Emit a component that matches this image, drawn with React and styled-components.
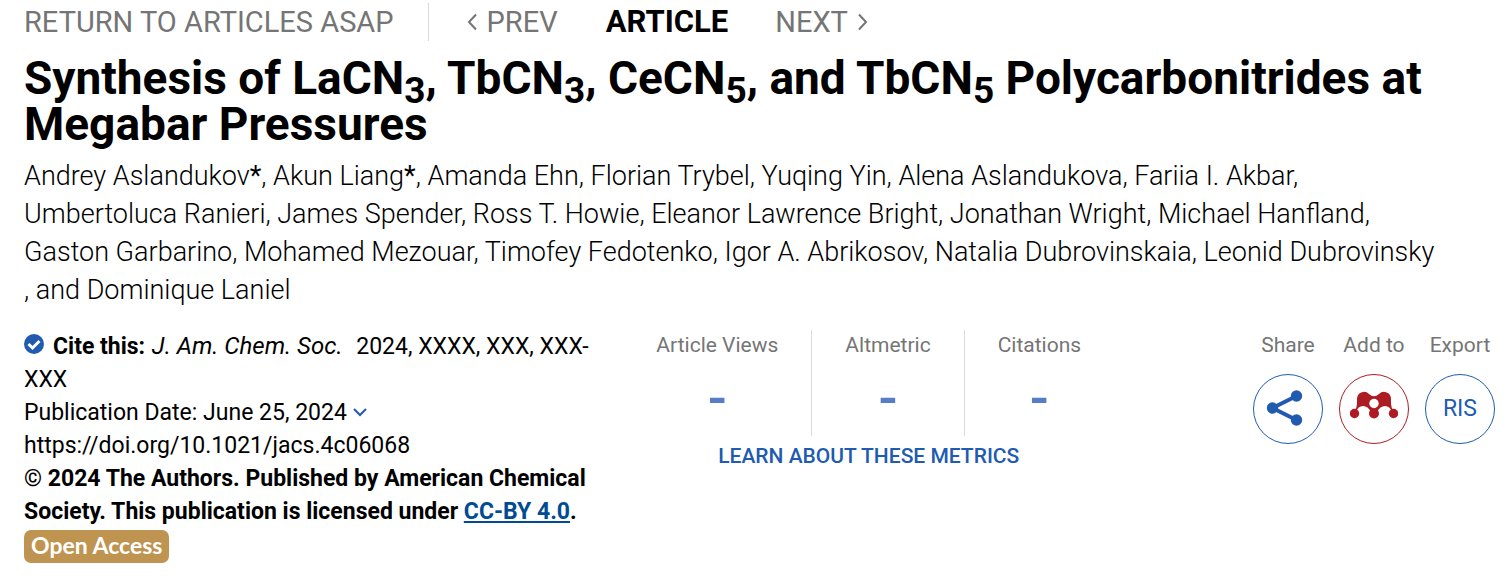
import React from "react";
import styled, { createGlobalStyle } from "styled-components";

const Global = createGlobalStyle`
  * { box-sizing: border-box; }
  body { margin: 0; background: #fff; color: #000; font-family: Roboto, "Liberation Sans", sans-serif; }
  a { color: inherit; text-decoration: none; }
  button { font: inherit; background: none; border: 0; padding: 0; cursor: pointer; }
`;

const Page = styled.main`padding: 4px 14px 16px 24px;`;

const Nav = styled.nav`
  display: flex; align-items: center; height: 36px; font-size: 29px; line-height: 36px; color: #757575;
`;
const ReturnLink = styled.a`padding-right: 34px; border-right: 1px solid #d5dcde; line-height: 38px;`;
const Step = styled.a`display: flex; align-items: center; gap: 10px; margin-left: ${(p) => p.$space}px;`;
const Current = styled.span`margin-left: 48px; color: #000; font-size: 31px; font-weight: 700;`;

const Title = styled.h1`
  margin: 15px 0 0; font-size: 46px; line-height: 46px; font-weight: 700;
  sub { font-size: 37px; line-height: 0; vertical-align: -9px; }
`;

const Authors = styled.p`
  margin: 10px 0 0; max-width: 1420px; font-size: 27px; line-height: 38px; font-weight: 300;
`;

const Details = styled.section`
  display: grid; grid-template-columns: 19fr 20fr auto; column-gap: 24px; margin-top: 21px;
`;
const Citation = styled.div`
  font-size: 23px; line-height: 33px;
  p { margin: 0; }
`;
const Journal = styled.cite`margin: 0 8px 0 1px; font-size: 24px; line-height: 30px;`;
const Licence = styled.a`color: #004b93; text-decoration: underline;`;
const Badge = styled.span`
  display: block; width: fit-content; margin-top: 2px; padding: 0 7px 2px; border-radius: 7px;
  background: #bf9450; color: #fff; font-family: Lato, sans-serif; font-size: 23px; line-height: 31px; font-weight: 700;
`;

const Metrics = styled.div`display: flex; flex-direction: column; align-items: flex-start; width: max-content;`;
const MetricRow = styled.div`display: flex;`;
const Metric = styled.div`
  height: 106px; padding: 0 33px; font-size: 21px; line-height: 30px; color: #757575; text-align: center;
  & + & { border-left: 1px solid #d5dcde; }
`;
const Value = styled.div`margin-top: 22px; font-size: 56px; line-height: 32px; font-weight: 500; color: #597dc5;`;
const MetricsLink = styled.a`align-self: center; margin-top: 4px; font-size: 21px; line-height: 32px; font-weight: 500; color: #205bb0;`;

const Actions = styled.div`display: flex; gap: 16px;`;
const Action = styled.label`
  display: flex; flex-direction: column; align-items: center; gap: 14px; width: 70px;
  font-size: 21px; line-height: 30px; color: #757575; white-space: nowrap;
`;
const Round = styled.button`
  display: flex; align-items: center; justify-content: center; width: 70px; height: 70px;
  border: 1px solid ${(p) => p.$color}; border-radius: 50%; color: ${(p) => p.$color}; font-size: 23px;
`;

const Chevron = ({ d, w, h, color = "#757575" }) => (
  <svg width={w} height={h} viewBox={`0 0 ${w} ${h}`} fill="none" stroke={color} strokeWidth="2" aria-hidden="true"><path d={d} /></svg>
);
const CheckMark = styled.svg`margin-right: 9px;`;

export default function App() {
  return (
    <>
      <Global />
      <Page>
        <Nav aria-label="Articles">
          <ReturnLink href="#asap">RETURN TO ARTICLES ASAP</ReturnLink>
          <Step href="#prev" $space={38}><Chevron w={10} h={18} d="M9 1.5 2 9l7 7.5" />PREV</Step>
          <Current>ARTICLE</Current>
          <Step href="#next" $space={47}>NEXT<Chevron w={10} h={18} d="M1 1.5 8 9l-7 7.5" /></Step>
        </Nav>
        <Title>Synthesis of LaCN<sub>3</sub>, TbCN<sub>3</sub>, CeCN<sub>5</sub>, and TbCN<sub>5</sub> Polycarbonitrides at Megabar Pressures</Title>
        <Authors>
          Andrey Aslandukov<b>*</b>, Akun Liang<b>*</b>, Amanda Ehn, Florian Trybel, Yuqing Yin, Alena Aslandukova, Fariia I. Akbar, Umbertoluca Ranieri, James Spender, Ross T. Howie, Eleanor Lawrence Bright, Jonathan Wright, Michael Hanfland, Gaston Garbarino, Mohamed Mezouar, Timofey Fedotenko, Igor A. Abrikosov, Natalia Dubrovinskaia, Leonid Dubrovinsky , and Dominique Laniel
        </Authors>
        <Details>
          <Citation>
            <p>
              <CheckMark width="20" height="20" viewBox="0 0 20 20" aria-hidden="true"><circle cx="10" cy="10" r="10" fill="#205bb0" /><path d="m4.5 10 4 4 7-7" fill="none" stroke="#fff" strokeWidth="3" /></CheckMark>
              <strong>Cite this:</strong> <Journal>J. Am. Chem. Soc.</Journal> 2024, XXXX, XXX, XXX-XXX
            </p>
            <p>Publication Date: June 25, 2024 <Chevron w={14} h={13} d="m1 2 6 6 6-6" color="#205bb0" /></p>
            <p><a href="#doi">https://doi.org/10.1021/jacs.4c06068</a></p>
            <p><strong>© 2024 The Authors. Published by American Chemical Society. This publication is licensed under <Licence href="#licence">CC-BY 4.0</Licence>.</strong></p>
            <Badge>Open Access</Badge>
          </Citation>
          <Metrics>
            <MetricRow>
              <Metric>Article Views<Value>-</Value></Metric>
              <Metric>Altmetric<Value>-</Value></Metric>
              <Metric>Citations<Value>-</Value></Metric>
            </MetricRow>
            <MetricsLink href="#metrics">LEARN ABOUT THESE METRICS</MetricsLink>
          </Metrics>
          <Actions>
            <Action>Share
              <Round $color="#205bb0">
                <svg width="44" height="44" viewBox="0 0 44 44" fill="currentColor" aria-hidden="true">
                  <path d="M30.5 9 6.5 21l24 12" fill="none" stroke="currentColor" strokeWidth="4" />
                  <circle cx="30.5" cy="9" r="5.7" /><circle cx="6.5" cy="21" r="5.7" /><circle cx="30.5" cy="33" r="5.7" />
                </svg>
              </Round>
            </Action>
            <Action>Add to
              <Round $color="#ad1c22">
                <svg width="48" height="48" viewBox="0 0 48 48" fill="currentColor" aria-hidden="true">
                  <path d="M7 14a7 7 0 0 1 12-5q5 4.500 10 0a7 7 0 0 1 12 5v5q0 4 3 7l-2 1q-2-6-7-6-5 0-8 6h-6q-3-6-8-6-5 0-7 6l-2-1q3-3 3-7z" />
                  <circle cx="4.5" cy="28.5" r="4.7" /><circle cx="24" cy="28.5" r="5" /><circle cx="43.5" cy="28.5" r="4.7" />
                  <circle cx="24" cy="18.5" r="4.7" fill="#fff" />
                </svg>
              </Round>
            </Action>
            <Action>Export<Round $color="#205bb0">RIS</Round></Action>
          </Actions>
        </Details>
      </Page>
    </>
  );
}
